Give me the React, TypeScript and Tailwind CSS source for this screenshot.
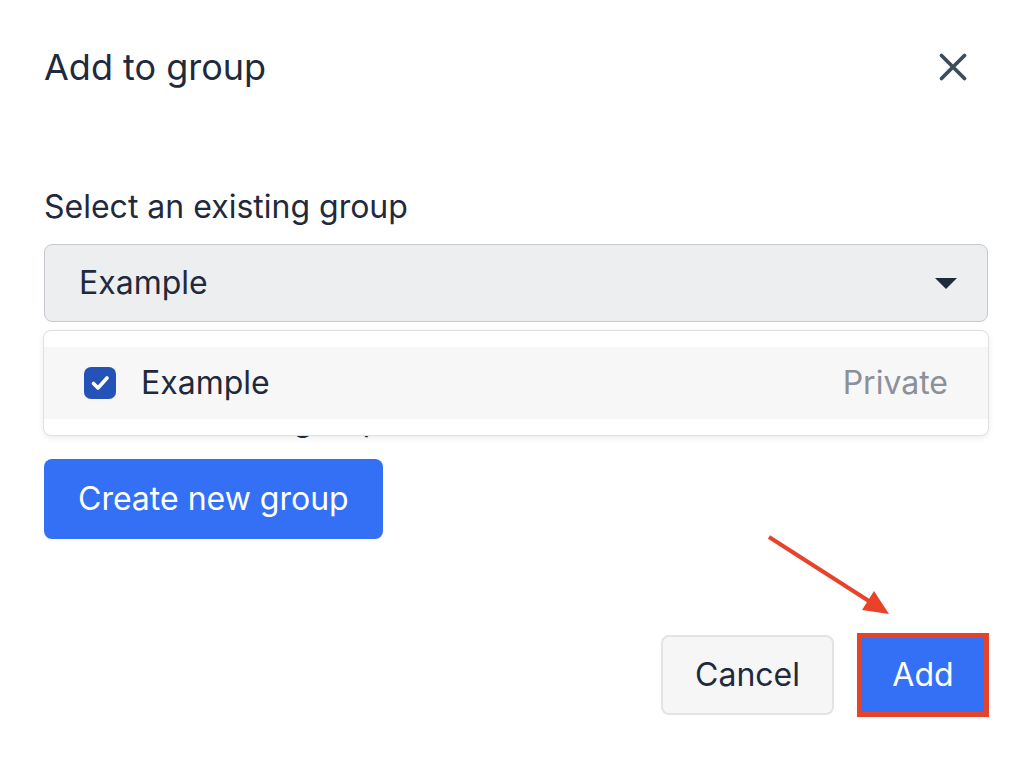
import React from 'react';

const AddToGroupDialog = () => {
  return (
    <div className="relative w-[1022px] h-[758px] bg-white font-['Inter',sans-serif] text-[#1f2a3c] pl-[44px] pr-[34px] pt-[45px] overflow-hidden">
      {/* header */}
      <div className="flex items-center justify-between">
        <h1 className="text-[36px] leading-[44px] font-normal">Add to group</h1>
        <button className="w-[36px] h-[36px] flex items-center justify-center mr-[17px]">
          <svg width="30" height="30" viewBox="0 0 30 30" fill="none">
            <path d="M3.5 3.5L26.5 26.5M26.5 3.5L3.5 26.5" stroke="#3b4d5a" strokeWidth="3.8" strokeLinecap="round" />
          </svg>
        </button>
      </div>

      <div className="relative mt-[98px]">
        <label className="block text-[32px] leading-[40px]">Select an existing group</label>
        <div className="mt-[17px] h-[78px] rounded-[8px] border border-[#c5c8cc] bg-[#edeef0] flex items-center justify-between pl-[34px] pr-[30px]">
          <span className="text-[32px] leading-[40px]">Example</span>
          <svg width="22" height="11" viewBox="0 0 22 11">
            <path d="M0 0H22L11 11Z" fill="#1f2a3c" />
          </svg>
        </div>

        <label className="block mt-[78px] text-[32px] leading-[40px]">Or create a new group</label>
        <button className="mt-[19px] h-[80px] px-[34px] rounded-[8px] bg-[#3370f6] text-white text-[32px] leading-[40px]">
          Create new group
        </button>

        {/* open dropdown menu */}
        <div className="absolute left-[-1px] right-[-1px] top-[143px] rounded-[8px] border border-[#dfe0e3] bg-white py-4 shadow-[0_2px_6px_rgba(0,0,0,0.08)]">
          <div className="h-[72px] bg-[#f7f7f7] flex items-center pl-[40px] pr-[40px]">
            <span className="w-[32px] h-[32px] rounded-[7px] bg-[#2552b9] flex items-center justify-center">
              <svg width="32" height="32" viewBox="0 0 32 32" fill="none">
                <path d="M9.5 16.5L14 21L23 11" stroke="white" strokeWidth="3.6" strokeLinecap="round" strokeLinejoin="round" />
              </svg>
            </span>
            <span className="ml-[25px] text-[32px] leading-[40px]">Example</span>
            <span className="ml-auto text-[32px] leading-[40px] text-[#8b9099]">Private</span>
          </div>
        </div>
      </div>

      {/* footer */}
      <div className="mt-[94px] flex items-center justify-end">
        <button className="w-[173px] h-[80px] rounded-[8px] border-2 border-[#e3e3e3] bg-[#f6f6f6] text-[32px] leading-[40px]">
          Cancel
        </button>
        <button className="ml-[23px] w-[132px] h-[84px] border-[5px] border-[#e8432a] bg-[#3370f6] text-white text-[32px] leading-[40px] mr-[-1px]">
          Add
        </button>
      </div>

      {/* annotation arrow */}
      <svg className="absolute left-0 top-0 pointer-events-none" width="1022" height="758">
        <line x1="769" y1="537" x2="872" y2="603" stroke="#e8432a" strokeWidth="4" />
        <path d="M889 614L862 610L874 591Z" fill="#e8432a" />
      </svg>
    </div>
  );
};

export default function App() {
  return <AddToGroupDialog />;
}
